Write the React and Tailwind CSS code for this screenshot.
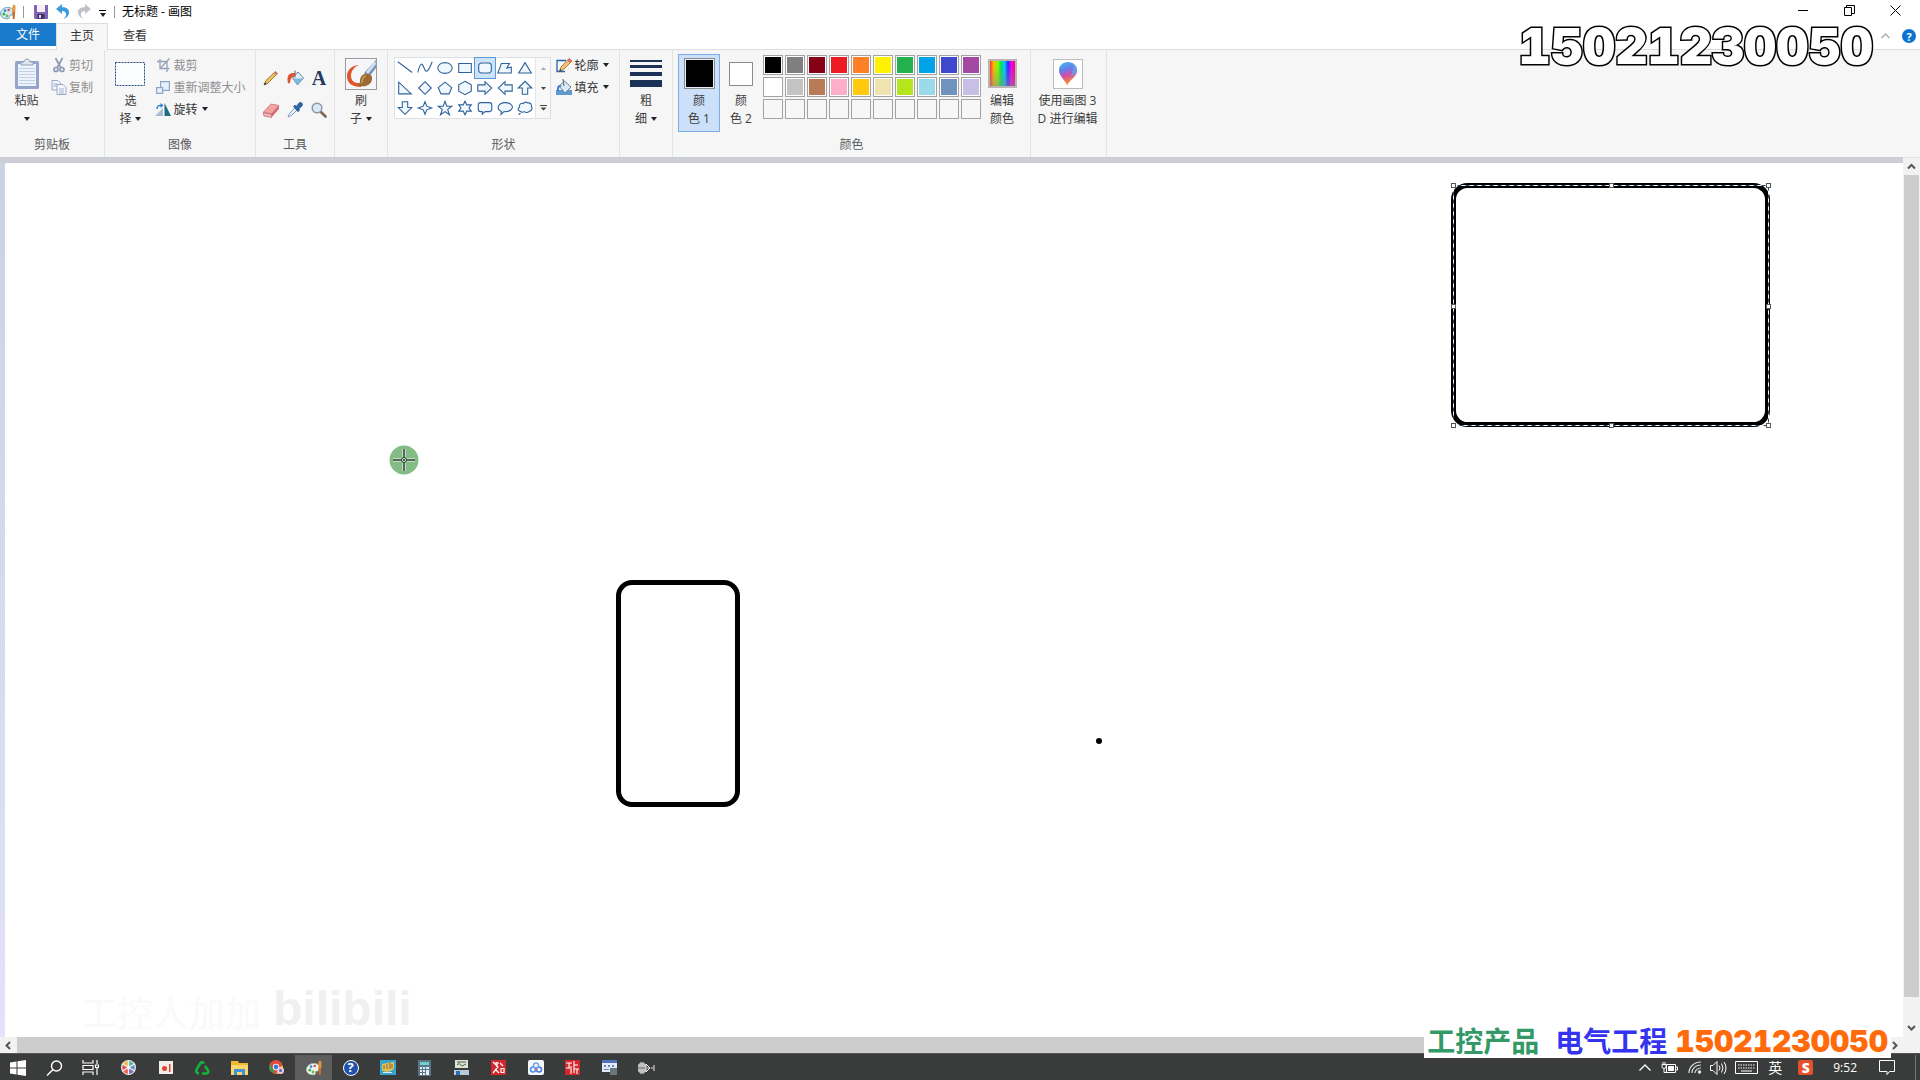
import React from "react";

const FONT = "font-['Open_Sans','Noto_Sans_CJK_SC',sans-serif]";

function Caret({ className = "" }) {
  return (
    <svg width="6" height="4" viewBox="0 0 6 4" className={`inline-block shrink-0 ${className}`} aria-hidden="true">
      <path d="M0 0h6L3 4z" fill="#222" />
    </svg>
  );
}

function Group({ label, width, children }) {
  return (
    <section className={`flex flex-col items-stretch border-r border-[#e2e3e5] ${width}`}>
      <div className="flex h-[84px] items-start justify-center pt-1">{children}</div>
      <h2 className="text-center text-xs leading-6 text-[#5a5a5a]">{label}</h2>
    </section>
  );
}

function BigButton({ icon, lines, caret, className = "" }) {
  return (
    <button className={`flex h-[78px] flex-col items-center border text-xs leading-[18px] text-[#3c3c3c] ${className}`}>
      <span className="flex h-[37px] items-center justify-center">{icon}</span>
      {lines.map((line, i) => (
        <span key={i} className="flex h-[18px] items-center justify-center gap-1 whitespace-nowrap">
          {line}
          {caret && i === lines.length - 1 && <Caret />}
        </span>
      ))}
    </button>
  );
}

function SmallButton({ icon, label, caret, disabled }) {
  return (
    <button
      disabled={disabled}
      className={`flex h-[22px] items-center whitespace-nowrap text-xs ${disabled ? "text-[#8f8f8f]" : "text-[#333]"}`}
    >
      <span className="flex w-[18px] justify-center">{icon}</span>
      <span className="ml-px pt-px">{label}</span>
      {caret && <Caret className="ml-1" />}
    </button>
  );
}

/* ---------- title bar icons ---------- */
const PaintIcon = ({ size = 16, dark = false }) => (
  <svg width={size} height={size} viewBox="0 0 16 16">
    <path
      d="M.5 10C.3 6.500 3.500 3.500 7.500 3.500c4 0 6.500 2 6.500 5 0 2-1.500 2.500-3 2.500s-2 .8-1.500 2c.4 1.200-.5 1.800-2.500 1.800-4 0-6.300-2-6.500-4.800z"
      fill={dark ? "#f1f6f3" : "#d2eaf5"}
      stroke={dark ? "#9cc4b4" : "#5b9bb8"}
      strokeWidth=".9"
    />
    <circle cx="3.800" cy="10" r="1.500" fill="#45a949" />
    <circle cx="5" cy="6.700" r="1.400" fill="#3d8fd6" />
    <circle cx="8.700" cy="6" r="1.300" fill="#d9534a" />
    <circle cx="7" cy="12" r="1.400" fill="#7fb53a" />
    <path d="M12 8l.6-6L14 .3 15.500 2l-.2 6z" fill="#e9943c" />
    <path d="M12.200 8h3l-.6 7h-1.800z" fill="#c9702a" />
  </svg>
);
const SaveIcon = () => (
  <svg width="14" height="14" viewBox="0 0 14 14">
    <path d="M0 0h14v14H1l-1-1z" fill="#8264b4" />
    <path d="M3 0h8v7H3z" fill="#f3f0fa" />
    <path d="M3.500 9h7v5h-7z" fill="#3f3364" />
    <path d="M5 10h2v3H5z" fill="#ddd6ee" />
  </svg>
);
const UndoIcon = ({ color, flip }) => (
  <svg width="14" height="15" viewBox="0 0 14 15" className={flip ? "-scale-x-100" : ""}>
    <path d="M0 5l6-5v3.200C11 3 13.500 5.500 13 9c-.4 2.800-2.500 5-5.500 6 1.800-1.500 2.800-3.500 2.500-5.200C9.700 7.800 8.300 7 6 7v3z" fill={color} />
  </svg>
);

/* ---------- ribbon icons ---------- */
const PasteIcon = () => (
  <svg width="26" height="32" viewBox="0 0 26 32">
    <rect x="1" y="3" width="24" height="28" rx="1.500" fill="#93a5c8" />
    <rect x="4" y="6" width="18" height="22" fill="#eef3fb" />
    <path d="M5 10.500h16M5 13.500h16M5 16.500h16M5 19.500h16M5 22.500h16M5 25.500h16" stroke="#c3d1e8" />
    <path d="M7 7V4h3c0-4 6-4 6 0h3v3z" fill="#dfe5ef" stroke="#8b99b3" strokeWidth=".9" />
  </svg>
);
const CutIcon = () => (
  <svg width="12" height="16" viewBox="0 0 12 16" fill="none" stroke="#8d9ab3" strokeWidth="1.700">
    <path d="M2.500 1l5.500 10M9.500 1L4 11" />
    <circle cx="3" cy="12.500" r="2" />
    <circle cx="9" cy="12.500" r="2" />
  </svg>
);
const CopyIcon = () => (
  <svg width="16" height="16" viewBox="0 0 16 16" fill="#f3f6fb" stroke="#98a9c8">
    <path d="M1 1.500h6l2.500 2.500v7H1z" />
    <path d="M2.500 5h4M2.500 7h4" />
    <path d="M6 5.500h6l3 3v7H6z" />
    <path d="M8 10h5M8 12h5M8 14h5" strokeWidth=".8" />
  </svg>
);
const CropIcon = () => (
  <svg width="13" height="14" viewBox="0 0 13 14" fill="none" stroke="#93a0b6" strokeWidth="1.300">
    <path d="M3 1v9.500h9.500M0 3.500h10V14M12.500 .5L4 9.500" />
  </svg>
);
const ResizeIcon = () => (
  <svg width="14" height="13" viewBox="0 0 14 13" fill="#e7effa" stroke="#8da3c8" strokeWidth="1.200">
    <rect x="4.600" y=".6" width="8.800" height="8.800" />
    <rect x=".6" y="6.600" width="6" height="5.800" />
  </svg>
);
const RotateIcon = () => (
  <svg width="16" height="13" viewBox="0 0 16 13">
    <path d="M8 5v8H0z" fill="#a8bdd0" />
    <path d="M9.500 0v13H16z" fill="#1d6b84" />
    <path d="M2 6C2 3 4 2 6 2.500" fill="none" stroke="#2d7bd0" strokeWidth="1.400" />
    <path d="M5.500 0l3 2.500-3 2.500z" fill="#2d7bd0" />
  </svg>
);
const SelectIcon = () => (
  <svg width="30" height="24" viewBox="0 0 30 24">
    <rect x=".5" y=".5" width="29" height="23" fill="#fbfcfe" stroke="#25488c" strokeDasharray="2 1" />
  </svg>
);
const PencilIcon = () => (
  <svg width="16" height="16" viewBox="0 0 16 16">
    <path d="M1 15l2-4.500L12.500 1.500l2 2L5 13z" fill="#f1c55a" stroke="#7c5a22" strokeWidth=".8" />
    <path d="M1 15l1-2.600L3.600 14z" fill="#222" />
    <path d="M12.500 1.500l2 2-1.500 1.500-2-2z" fill="#dc7468" />
  </svg>
);
const BucketIcon = () => (
  <svg width="17" height="16" viewBox="0 0 17 16">
    <path d="M5.500 8L11 2l5.500 6L10.500 15z" fill="#e3edf6" stroke="#6385a6" />
    <path d="M6.500 8.500h9.500L10.500 15z" fill="#7fb9e0" />
    <path d="M8 .5v7" stroke="#5a6c80" fill="none" />
    <path d="M9 3.500C4 2 .5 4.500 .5 9c0 3 .5 4.500 1.500 4.500S3.200 12 3.500 10C4 8 5 7 7 6.500z" fill="#dc5430" />
  </svg>
);
const TextTool = () => <span className="font-['Liberation_Serif',serif] text-xl leading-4 font-bold text-[#24395c]">A</span>;
const EraserIcon = () => (
  <svg width="16" height="15" viewBox="0 0 16 15">
    <path d="M0 9.500L8 1l8 1.500L8.500 11z" fill="#f5a2a2" stroke="#bd6570" strokeWidth=".7" />
    <path d="M0 9.500l8.500 1.500v3.500L1 13z" fill="#f0b3b3" stroke="#bd6570" strokeWidth=".7" />
    <path d="M16 2.500v3.300l-7.500 8.700V11z" fill="#d46670" />
  </svg>
);
const PickerIcon = () => (
  <svg width="16" height="16" viewBox="0 0 16 16">
    <path d="M1 15l1.500-3.500L8 6l2 2-5.500 5.500z" fill="#eaf2fb" stroke="#6f94bc" strokeWidth=".9" />
    <path d="M6.500 4.500L8 3.200l1.500 1L12 1c2-2 4.500 1 3 3l-3 2.800.5 1.500-1.500 1.400z" fill="#2d66ae" stroke="#1c4279" strokeWidth=".6" />
  </svg>
);
const MagnifierIcon = () => (
  <svg width="16" height="16" viewBox="0 0 16 16">
    <path d="M9.500 9.500l5 5" stroke="#7c6555" strokeWidth="2.600" strokeLinecap="round" />
    <circle cx="6" cy="6" r="4.800" fill="#d7eaf6" stroke="#8a95a1" strokeWidth="1.400" />
  </svg>
);
const BrushIcon = () => (
  <svg width="32" height="32" viewBox="0 0 32 32">
    <rect x=".5" y=".5" width="31" height="31" fill="#f4f6f9" stroke="#9b9b9b" />
    <path d="M14 7C7 7 2 12 2 18c0 7 5 11 14 11l1-4c-7 1-11-2-11-7 0-5 3-9 8-11z" fill="#e2542a" />
    <path d="M31 2L19 15l5 4 7-9z" fill="#7794b5" />
    <path d="M30 3l-9 11 2 2 8-10z" fill="#d4e2ef" />
    <path d="M23 16c-5-1-8 3-8 7 0 2-1 3-3 4 6 3 16 1 15-8 0-1-2-3-4-3z" fill="#9c6b33" />
    <path d="M21 18c-3 1-4 4-4 7" stroke="#c99a5c" strokeWidth="1.500" fill="none" />
  </svg>
);
const OutlineIcon = () => (
  <svg width="16" height="15" viewBox="0 0 16 15">
    <path d="M10 2.500H1v11h8" fill="none" stroke="#2564a8" strokeWidth="1.300" />
    <path d="M3.500 13L5 9l8-8.500L16 3 7.500 11.500z" fill="#f2c173" stroke="#9a6a35" strokeWidth=".8" />
    <path d="M13 .5L16 3l-2 2-2.800-2.500z" fill="#d97568" />
    <path d="M3.500 13l.8-2 1.300 1.200z" fill="#222" />
  </svg>
);
const FillIcon = () => (
  <svg width="16" height="16" viewBox="0 0 16 16">
    <path d="M0 11h16v5H0z" fill="#5e9bd5" />
    <path d="M3 7l5.500-5L15 8l-6 6z" fill="#dce8f3" stroke="#66819c" />
    <path d="M7 0l1 7" stroke="#566" fill="none" />
    <path d="M4 6C1 6 1 9 1 12h2c0-3 0-4 3-5z" fill="#3f81c4" />
  </svg>
);
const SizeIcon = () => (
  <svg width="32" height="28" viewBox="0 0 32 28" fill="#1c3156">
    <path d="M0 0h32v2H0zM0 5h32v3H0zM0 12h32v4H0zM0 20h32v7H0z" />
  </svg>
);
const SPECTRUM =
  "bg-[linear-gradient(to_bottom,transparent_20%,#8888_100%),linear-gradient(to_right,#f33,#fb0_15%,#7f0_32%,#0d6_45%,#0cf_58%,#32f_72%,#e0f_85%,#f06)]";
const Paint3DIcon = () => (
  <svg width="30" height="30" viewBox="0 0 30 30">
    <defs>
      <linearGradient id="drop" x1="0" y1="0" x2=".25" y2="1">
        <stop offset="0" stopColor="#35bdf0" />
        <stop offset=".4" stopColor="#6a7be8" />
        <stop offset=".65" stopColor="#d94aa8" />
        <stop offset="1" stopColor="#f79a20" />
      </linearGradient>
    </defs>
    <rect x=".5" y=".5" width="29" height="29" fill="#fff" stroke="#bcbcbc" />
    <path d="M15 3c5 0 9 3.500 9 8.500 0 6-6 8-10 15-1-5-8-9-8-15C6 6.500 10 3 15 3z" fill="url(#drop)" />
    <path d="M19 4c4 2 5 5 5 8-1 3-3 4-6 5 2-5 3-9 1-13z" fill="#5aa7f2" opacity=".8" />
  </svg>
);

const SHAPES = [
  ["直线", "M2 3l16 12"],
  ["曲线", "M2 15C5 2 7 5 9 10s4 6 9-7"],
  ["椭圆形", "M2 10a8 6 0 1 0 16 0a8 6 0 1 0-16 0z"],
  ["矩形", "M3 5h14v10H3z"],
  ["圆角矩形", "M6 4.500h8a3 3 0 0 1 3 3v5a3 3 0 0 1-3 3H6a3 3 0 0 1-3-3v-5a3 3 0 0 1 3-3z"],
  ["多边形", "M2 15.500L6 5h9l-3 5 5-1v6.500z"],
  ["三角形", "M10 4l7 11.500H3z"],
  ["直角三角形", "M3 3.500v13h14z"],
  ["菱形", "M10 3l7 7-7 7-7-7z"],
  ["五边形", "M10 3.500l7.500 6-3 7h-9l-3-7z"],
  ["六边形", "M10 2.500l7 4v7l-7 4-7-4v-7z"],
  ["右箭头", "M2 6.500h8V3l7.500 7-7.500 7v-3.500H2z"],
  ["左箭头", "M18 6.500h-8V3l-7.500 7 7.500 7v-3.500h8z"],
  ["上箭头", "M10 2.500l7.500 7.500H13v7H7v-7H2.500z"],
  ["下箭头", "M10 17l7.500-7.500H13V3H7v6.500H2.500z"],
  ["四角星形", "M10 3l2 5 5.500 2-5.500 2-2 5-2-5-5.500-2L8 8z"],
  ["五角星形", "M10 2.500l2 5.500h5.500L13 11.500l2 6-5-3.500-5 3.500 2-6L2.500 8H8z"],
  ["六角星形", "M10 2.500l2 4h5L14.500 10l2.500 3.500h-5l-2 4-2-4H3L5.500 10 3 6.500h5z"],
  ["圆角矩形标注", "M5 4h10q2.500 0 2.500 2.500v5q0 2.500-2.500 2.500h-5l-3 3v-3H5q-2.500 0-2.500-2.500v-5Q2.500 4 5 4z"],
  ["椭圆形标注", "M6 14C-1 11 3 4 10 4s11 5 6 8.500c-2 1.500-4 1.800-7 1.500l-3.500 3z"],
  ["云形标注", "M5 14c-4-1-3-4-1-5-1-3 2-5 4-4 2-2 4-2 5-.5 3-1 5 2 4 4 2 2 0 5-2 5-2 2-4 2-6 .5-1 1-2 1-4 0zM5 15.500l-2 2"],
];

const COLORS = [
  "#000000", "#7f7f7f", "#880015", "#ed1c24", "#ff7f27", "#fff200", "#22b14c", "#00a2e8", "#3f48cc", "#a349a4",
  "#ffffff", "#c3c3c3", "#b97a57", "#ffaec9", "#ffc90e", "#efe4b0", "#b5e61d", "#99d9ea", "#7092be", "#c8bfe7",
  null, null, null, null, null, null, null, null, null, null,
];

function TitleBar() {
  return (
    <header className="flex h-[23px] items-start bg-white">
      <div className="flex h-[23px] items-center">
        <PaintIcon />
        <span className="mx-[7px] h-3 w-px bg-[#999]" />
        <button aria-label="保存" className="ml-[3px]"><SaveIcon /></button>
        <button aria-label="撤消" className="ml-2"><UndoIcon color="#3c9bdc" /></button>
        <button aria-label="重做" className="ml-[7px]"><UndoIcon color="#bfc3c8" flip /></button>
        <button aria-label="自定义快速访问工具栏" className="ml-2 flex flex-col items-center gap-0.5 pt-1">
          <span className="h-px w-[7px] bg-black" />
          <Caret />
        </button>
        <span className="ml-2 h-3 w-px bg-[#999]" />
        <h1 className="ml-[7px] text-xs text-black">无标题 - 画图</h1>
      </div>
      <div className="mr-0.5 ml-auto flex">
        <button aria-label="最小化" className="flex h-5 w-[46px] items-center justify-center">
          <svg width="11" height="11"><path d="M0 5.500h10" stroke="#000" /></svg>
        </button>
        <button aria-label="还原" className="flex h-5 w-[46px] items-center justify-center">
          <svg width="11" height="11" fill="none" stroke="#000"><path d="M.5 2.500h7v8h-7zM2.500 2.500v-2h8v8h-3" /></svg>
        </button>
        <button aria-label="关闭" className="flex h-5 w-[46px] items-center justify-center">
          <svg width="11" height="11"><path d="M.5 .5l10 10M10.500 .5l-10 10" stroke="#000" /></svg>
        </button>
      </div>
    </header>
  );
}

function Tabs() {
  return (
    <nav className="flex h-[27px] items-start border-b border-[#dcddde] bg-white text-xs text-[#333]">
      <button className="h-[23px] w-14 bg-[#1979ca] text-white">文件</button>
      <button className="h-[27px] w-[52px] border-x border-t border-[#dcddde] bg-[#f6f6f7] pb-0.5">主页</button>
      <button className="h-[25px] w-[54px]">查看</button>
      <div className="ml-auto flex h-[26px] items-center gap-3 pr-1">
        <button aria-label="折叠功能区">
          <svg width="9" height="6" fill="none" stroke="#aaa" strokeWidth="1.300"><path d="M.5 5l4-4 4 4" /></svg>
        </button>
        <button aria-label="帮助" className="flex size-[14px] items-center justify-center rounded-full bg-[#0b74d0] text-[11px] leading-none font-bold text-white">?</button>
      </div>
    </nav>
  );
}

function Ribbon() {
  return (
    <div className="flex h-[107px] overflow-hidden bg-[#f6f6f7]">
      <Group label="剪贴板" width="w-[105px]">
        <BigButton
          icon={<PasteIcon />}
          lines={["粘贴", <Caret key="c" />]}
          className="w-[50px] border-transparent pl-[3px]"
        />
        <div className="flex w-[54px] flex-col pr-1">
          <SmallButton icon={<CutIcon />} label="剪切" disabled />
          <SmallButton icon={<CopyIcon />} label="复制" disabled />
        </div>
      </Group>
      <Group label="图像" width="w-[151px]">
        <BigButton icon={<SelectIcon />} lines={["选", "择"]} caret className="w-12 border-transparent" />
        <div className="mr-2 flex flex-col">
          <SmallButton icon={<CropIcon />} label="裁剪" disabled />
          <SmallButton icon={<ResizeIcon />} label="重新调整大小" disabled />
          <SmallButton icon={<RotateIcon />} label="旋转" caret />
        </div>
      </Group>
      <Group label="工具" width="w-[79px]">
        <div className="grid grid-cols-3 pt-2">
          {[
            ["铅笔", <PencilIcon />],
            ["用颜色填充", <BucketIcon />],
            ["文本", <TextTool />],
            ["橡皮擦", <EraserIcon />],
            ["颜色选取器", <PickerIcon />],
            ["放大镜", <MagnifierIcon />],
          ].map(([name, icon]) => (
            <button key={name} aria-label={name} className="flex h-8 w-6 items-center justify-center">{icon}</button>
          ))}
        </div>
      </Group>
      <Group label="" width="w-[53px]">
        <BigButton icon={<BrushIcon />} lines={["刷", "子"]} caret className="w-11 border-transparent" />
      </Group>
      <Group label="形状" width="w-[232px]">
        <div className="mt-[3px] flex border border-[#dcdfe3] bg-white">
          <div className="grid grid-cols-7">
            {SHAPES.map(([name, d]) => (
              <button
                key={name}
                aria-label={name}
                className={`flex h-5 w-5 items-center justify-center ${name === "圆角矩形" ? "bg-[#cfe3f8] outline outline-[#5d9bd8]" : ""}`}
              >
                <svg width="18" height="18" viewBox="0 0 20 20" fill="#f0f7fd" stroke="#2f6299" strokeWidth="1.200">
                  <path d={d} fill={name === "曲线" ? "none" : undefined} />
                </svg>
              </button>
            ))}
          </div>
          <div className="flex w-[15px] flex-col border-l border-[#e4e6e9] bg-[#f8f8f9]">
            <button aria-label="向上滚动" className="flex flex-1 items-center justify-center">
              <svg width="5" height="3"><path d="M0 3h5L2.500 0z" fill="#aaa" /></svg>
            </button>
            <button aria-label="向下滚动" className="flex flex-1 items-center justify-center">
              <svg width="5" height="3"><path d="M0 0h5L2.500 3z" fill="#444" /></svg>
            </button>
            <button aria-label="更多形状" className="flex flex-1 items-center justify-center">
              <svg width="7" height="6"><path d="M0 0h7v1H0zM.5 2.500h6l-3 3z" fill="#444" /></svg>
            </button>
          </div>
        </div>
        <div className="mr-1 ml-1 flex flex-col">
          <SmallButton icon={<OutlineIcon />} label="轮廓" caret />
          <SmallButton icon={<FillIcon />} label="填充" caret />
        </div>
      </Group>
      <Group label="" width="w-[53px]">
        <BigButton icon={<SizeIcon />} lines={["粗", "细"]} caret className="w-11 border-transparent" />
      </Group>
      <Group label="颜色" width="w-[358px]">
        <BigButton
          icon={<span className="size-[31px] border border-[#8b8b8b] bg-black ring-1 ring-[#e6eefb] ring-inset" />}
          lines={["颜", "色 1"]}
          className="w-[42px] border-[#7aaee6] bg-[#cde0fa]"
        />
        <BigButton
          icon={<span className="size-6 border border-[#8b8b8b] bg-white" />}
          lines={["颜", "色 2"]}
          className="w-[42px] border-transparent"
        />
        <div className="mt-px ml-px grid grid-cols-10 gap-0.5">
          {COLORS.map((c, i) => (
            <button
              key={i}
              aria-label={c ? `颜色 ${c}` : "空颜色"}
              className={`size-5 border border-[#a3a3a3] p-px ${c ? "bg-white" : "bg-[#f7f7f8]"}`}
            >
              {c && <span className="block size-full" style={{ backgroundColor: c }} />}
            </button>
          ))}
        </div>
        <BigButton
          icon={<span className={`size-[29px] border-2 border-[#b9b5b5] ${SPECTRUM}`} />}
          lines={["编辑", "颜色"]}
          className="mr-0.5 w-[42px] border-transparent"
        />
      </Group>
      <Group label="" width="w-[76px]">
        <BigButton icon={<Paint3DIcon />} lines={["使用画图 3", "D 进行编辑"]} className="mr-0.5 w-[70px] border-transparent" />
      </Group>
    </div>
  );
}

const HANDLES = [
  [3, 3], [161, 3], [318, 3], [3, 124], [318, 124], [3, 243], [161, 243], [318, 243],
];

function Canvas() {
  return (
    <div className="relative flex-1 overflow-hidden bg-white">
      {/* drawn objects */}
      <div className="absolute top-[417px] left-[611px] h-[227px] w-[124px] rounded-2xl border-[5px] border-black" />
      <div className="absolute top-[575px] left-[1091px] size-[6px] rounded-full bg-black" />
      <svg className="absolute top-[19px] left-[1445px]" width="322" height="248" fill="none">
        <rect x="3.500" y="3.500" width="314" height="239" rx="14" stroke="#000" strokeWidth="5" />
        <rect x="3.500" y="3.500" width="315" height="240" stroke="#27486f" />
        <rect x="3.500" y="3.500" width="315" height="240" stroke="#fff" strokeDasharray="4 4" />
        {HANDLES.map(([x, y]) => (
          <rect key={`${x}-${y}`} x={x - 1.5} y={y - 1.5} width="4" height="4" fill="#fff" stroke="#555" />
        ))}
      </svg>
      {/* pointer */}
      <svg className="absolute top-[282px] left-[384px]" width="30" height="30" fill="none">
        <circle cx="15" cy="15" r="14.500" fill="#85bb84" />
        <path d="M4 15h22M15 4v22" stroke="#fff" strokeWidth="3" />
        <path d="M4 15h22M15 4v22" stroke="#1f3a24" strokeWidth="1.500" />
        <circle cx="15" cy="15" r="2.500" fill="#d8ecd8" stroke="#1f3a24" />
        <circle cx="15" cy="15" r="1" fill="#1f3a24" />
      </svg>
      {/* channel mark */}
      <div className="absolute bottom-0 left-[76px] flex items-end gap-3">
        <p className="text-[36px] leading-[46px] text-[#fafafa]">工控人加加</p>
        <p className="font-['Liberation_Sans',sans-serif] text-[48px] leading-[56px] font-bold text-[#f0f0f0]">bilibili</p>
      </div>
    </div>
  );
}

function Chevron({ d }) {
  return (
    <svg width="9" height="9" fill="none" stroke="#555" strokeWidth="2"><path d={d} /></svg>
  );
}

function Workspace() {
  return (
    <main className="flex flex-1">
      <div className="flex min-w-0 flex-1 flex-col">
        <div className="h-1.5 bg-[#cbced9]" />
        <div className="flex flex-1">
          <div className="w-[5px] bg-gradient-to-b from-[#c9d3e2] to-[#e2e2fa]" />
          <Canvas />
        </div>
        <div className="flex h-4 bg-[#f2f2f2]">
          <button aria-label="向左滚动" className="flex w-[17px] items-center justify-center"><Chevron d="M6 1L2.500 4.500 6 8" /></button>
          <div className="mr-6 flex-1 bg-[#cdcdcd]" />
          <button aria-label="向右滚动" className="flex w-[17px] items-center justify-center"><Chevron d="M3 1l3.500 3.500L3 8" /></button>
        </div>
      </div>
      <div className="flex w-[17px] flex-col border-t border-[#e2e2e2] bg-[#f2f2f2]">
        <button aria-label="向上滚动" className="flex h-[17px] items-center justify-center"><Chevron d="M1 6.500L4.500 3 8 6.500" /></button>
        <div className="mx-px flex-1 bg-[#cdcdcd]" />
        <button aria-label="向下滚动" className="mt-5 mb-4 flex h-5 items-center justify-center"><Chevron d="M1 3l3.500 3.500L8 3" /></button>
      </div>
    </main>
  );
}

const TASKS = [
  ["调色盘", (
    <svg width="15" height="15" viewBox="0 0 14 14">
      <circle cx="7" cy="7" r="7" fill="#eee" />
      <path d="M7 7V1a6 6 0 0 1 5 3z" fill="#5b9" /><path d="M7 7l5.200-3a6 6 0 0 1 0 6z" fill="#59c" />
      <path d="M7 7l5.200 3A6 6 0 0 1 7 13z" fill="#86b" /><path d="M7 7v6a6 6 0 0 1-5.200-3z" fill="#e65" />
      <path d="M7 7l-5.200 3a6 6 0 0 1 0-6z" fill="#d55" /><path d="M7 7L1.800 4A6 6 0 0 1 7 1z" fill="#eb5" />
      <path d="M7 0v14M.9 3.500l12.200 7M.9 10.500l12.200-7" stroke="#eee" strokeWidth="1.200" />
      <circle cx="7" cy="7" r="1.500" fill="#fff" />
    </svg>
  )],
  ["演示", (
    <svg width="14" height="13"><path d="M0 0h14v13H0z" fill="#f4ece9" /><circle cx="5.500" cy="7.500" r="2.500" fill="#d8482d" /><path d="M10 3h1.500v8H10z" fill="#d8482d" /></svg>
  )],
  ["浏览器", (
    <svg width="15" height="14" fill="none" stroke="#12b43c" strokeWidth="2.600" strokeLinejoin="round"><path d="M4 12.500C0 12 1 9 3 6l2.500-4c1-1.500 2.500-1 3.500.5M10 5l3 4.500c1 2-.5 3-2 3H7" /></svg>
  )],
  ["文件资源管理器", (
    <svg width="17" height="14"><path d="M0 0h7l1 2h9v12H0z" fill="#efb834" /><path d="M0 4h17v10H0z" fill="#fbd76a" /><path d="M3 8h11v6h-3v-3H6v3H3z" fill="#3e95d8" /></svg>
  )],
  ["谷歌浏览器", (
    <svg width="16" height="15" viewBox="0 0 16 15">
      <circle cx="7" cy="7" r="7" fill="#e34b3d" /><path d="M1 4l5 9c-4 0-6-4-6-6z" fill="#2fa04e" /><path d="M7 14l5-8h2c0 5-3 8-7 8z" fill="#f3c52e" />
      <circle cx="7" cy="7" r="3.200" fill="#fff" /><circle cx="7" cy="7" r="2.400" fill="#3d78d8" /><circle cx="11.500" cy="10.500" r="3.500" fill="#f2c7da" /><circle cx="11.500" cy="10.500" r="1.500" fill="#4a68b8" />
    </svg>
  )],
  ["画图", <PaintIcon size={16} dark />],
  ["帮助程序", (
    <span className="flex size-4 items-center justify-center rounded-full border border-white bg-[#2350ac] text-[13px] leading-none font-bold text-white">?</span>
  )],
  ["图表工具", (
    <svg width="16" height="15"><path d="M0 0h16v15H0z" fill="#37a3cf" /><path d="M2 4l12-2v6c-2 4-9 5-12 2z" fill="#e2c453" /><path d="M4 9V5M7 9V4M10 9V3M12 8V4" stroke="#8b5a3a" fill="none" /><path d="M3 12.500h9" stroke="#d3f0f8" /></svg>
  )],
  ["计算器", (
    <svg width="13" height="16"><path d="M0 0h13v16H0z" fill="#59758a" /><path d="M2 2h9v3H2z" fill="#72d0c7" /><path d="M2 7h2v2H2zM5 7h2v2H5zM8 7h3v2H8zM2 10h2v2H2zM5 10h2v2H5zM8 10h3v5H8zM2 13h2v2H2zM5 13h2v2H5z" fill="#e8eef2" /></svg>
  )],
  ["监视程序", (
    <svg width="15" height="15"><path d="M1 0h13v8H1z" fill="#dde5d7" /><path d="M3 2h9M3 5l2-1.500L8 6l4-2" stroke="#485f45" fill="none" /><path d="M0 10h15v5H0z" fill="#b9cad5" /><path d="M2 11h4v4H2z" fill="#2a72b8" /></svg>
  )],
  ["视图程序", (
    <svg width="15" height="15"><path d="M0 0h15v15H0z" fill="#d3272e" /><path d="M2 2l5 5-5 6M6 2v5M3 3h5M10 8.500h3v4h-3zM4 9l4 4M9 3l3 3" stroke="#fff" fill="none" strokeWidth="1.200" /></svg>
  )],
  ["云盘", (
    <svg width="16" height="15"><rect width="16" height="15" rx="2" fill="#f7fafd" /><g fill="none" strokeWidth="1.500"><circle cx="5" cy="9.500" r="2.500" stroke="#3f97e8" /><circle cx="11" cy="9.500" r="2.500" stroke="#4a78e0" /><circle cx="8" cy="5.500" r="2.500" stroke="#7aa2e8" /><path d="M7 8.500l2 2" stroke="#e0607a" /></g></svg>
  )],
  ["电路程序", (
    <svg width="15" height="15"><path d="M0 0h15v15H0z" fill="#d3272e" /><path d="M1 3h6M4 3v5M1 8h4M6 6v8M9 1v12M9 5h4M9 9h5M12 9v5" stroke="#fff" fill="none" strokeWidth="1.100" /></svg>
  )],
  ["表格程序", (
    <svg width="16" height="15"><path d="M0 0h15v12H0z" fill="#e3e9f6" /><path d="M0 0h15v3H0z" fill="#4e70bd" /><path d="M2 5h2v2H2zM6 5h2v2H6zM10 5h2v2h-2zM2 9h5v1H2z" fill="#6b83b5" /><path d="M8 8h7v7H8z" fill="#68777c" /></svg>
  )],
  ["控制程序", (
    <svg width="17" height="12" fill="none" stroke="#eee"><path d="M1 2h6v8H1zM3 0v12M5 0v12M0 4h8M0 8h8M8 2l4 4-4 4zM10 5v2M13 6h2M16 3v6" /></svg>
  )],
];

function Taskbar() {
  return (
    <footer className="flex h-[27px] items-center border-t border-[#555] bg-[#3a3b3b] pt-px text-white">
      <button aria-label="开始" className="flex w-9 justify-center">
        <svg width="16" height="16" fill="#fff"><path d="M0 2.500l6.500-1v6H0zM7.500 1.300L16 0v7.500H7.500zM0 8.500h6.500v6l-6.500-1zM7.500 8.500H16V16l-8.500-1.300z" /></svg>
      </button>
      <button aria-label="搜索" className="flex w-9 justify-center">
        <svg width="17" height="16" fill="none" stroke="#fff" strokeWidth="1.400"><circle cx="10.500" cy="6" r="5" /><path d="M7 9.500L1 15.500" /></svg>
      </button>
      <button aria-label="任务视图" className="mr-0.5 flex w-9 justify-center">
        <svg width="17" height="15" fill="none" stroke="#fff" strokeWidth="1.200"><path d="M1 0v3h10V0M1 15v-3h10v3M1 5.500h10v4H1zM15 0v4M15 8v7M13.500 5h3v2.500h-3z" /></svg>
      </button>
      {TASKS.map(([name, icon]) => (
        <button
          key={name}
          aria-label={name}
          className={`flex h-[25px] w-[37px] items-center justify-center ${name === "画图" ? "bg-[#5c5d5c]" : ""}`}
        >
          {icon}
        </button>
      ))}
      <div className="mr-1 ml-auto flex h-[25px] items-center gap-2 border-r border-[#777] pr-5">
        <svg width="12" height="7" className="mr-0.5" fill="none" stroke="#fff" strokeWidth="1.300"><path d="M.5 6.500l5.500-5.500 5.500 5.500" /></svg>
        <svg width="17" height="13" className="mr-0.5" fill="none" stroke="#fff"><path d="M5.500 3.500h9v8h-9zM15 6h1.500v3H15M1 3.500h4v2a2 2 0 0 1-4 0zM2 1v2M4 1v2M3 8v3.500h2.500" /><path d="M7.500 5.500h5v4h-5z" fill="#fff" /></svg>
        <svg width="14" height="13" fill="none" stroke="#ddd" strokeWidth="1.200"><path d="M1 12C1 6 6 1 13 1M4 12c0-5 4-8 9-8M7 12c0-3 3-5 6-5" /><circle cx="11.500" cy="11" r="1.200" fill="#fff" /></svg>
        <svg width="17" height="14" fill="none" stroke="#fff"><path d="M.5 4.500h2.500l4-4v13l-4-4H.5zM9 4.500q2 2.500 0 5M11.500 2.500q3 4.500 0 9M14 1q4 6 0 12" /></svg>
        <svg width="23" height="13" fill="none" stroke="#fff"><path d="M.5 .5h22v12H.5z" /><path d="M3 4h17M3 7h17" strokeDasharray="1.500 1" /><path d="M6 10h11" /></svg>
        <span className="mx-0.5 text-sm leading-5">英</span>
        <span className="ml-1.5 flex size-[15px] items-center justify-center rounded-xs bg-[#e5502b] text-sm leading-none font-extrabold">S</span>
        <time className="ml-3 text-xs leading-5">9:52</time>
        <button aria-label="通知" className="ml-3.5">
          <svg width="16" height="15" fill="none" stroke="#fff" className="block"><path d="M.5 .5h15v11h-5l-2.500 3v-3H.5z" /></svg>
        </button>
      </div>
    </footer>
  );
}

export default function App() {
  return (
    <div className={`relative flex min-h-screen flex-col overflow-hidden bg-white ${FONT}`}>
      <TitleBar />
      <Tabs />
      <Ribbon />
      <Workspace />
      <Taskbar />
      <p className="absolute top-[16px] right-[47px] font-['Inter',sans-serif] text-[50px] leading-[60px] font-black text-white tabular-nums [-webkit-text-stroke:3px_#000] [paint-order:stroke_fill]">
        15021230050
      </p>
      <p className="absolute right-[29px] bottom-[22px] flex h-[34px] items-center bg-white px-[3px] text-[28px] leading-[34px] font-bold whitespace-nowrap">
        <span className="text-[#339966]">工控产品</span>
        <span className="ml-4 text-[#3333f0]">电气工程</span>
        <span className="ml-2 font-['Inter',sans-serif] text-[30px] font-black text-[#ff6a0a] tabular-nums">15021230050</span>
      </p>
    </div>
  );
}
